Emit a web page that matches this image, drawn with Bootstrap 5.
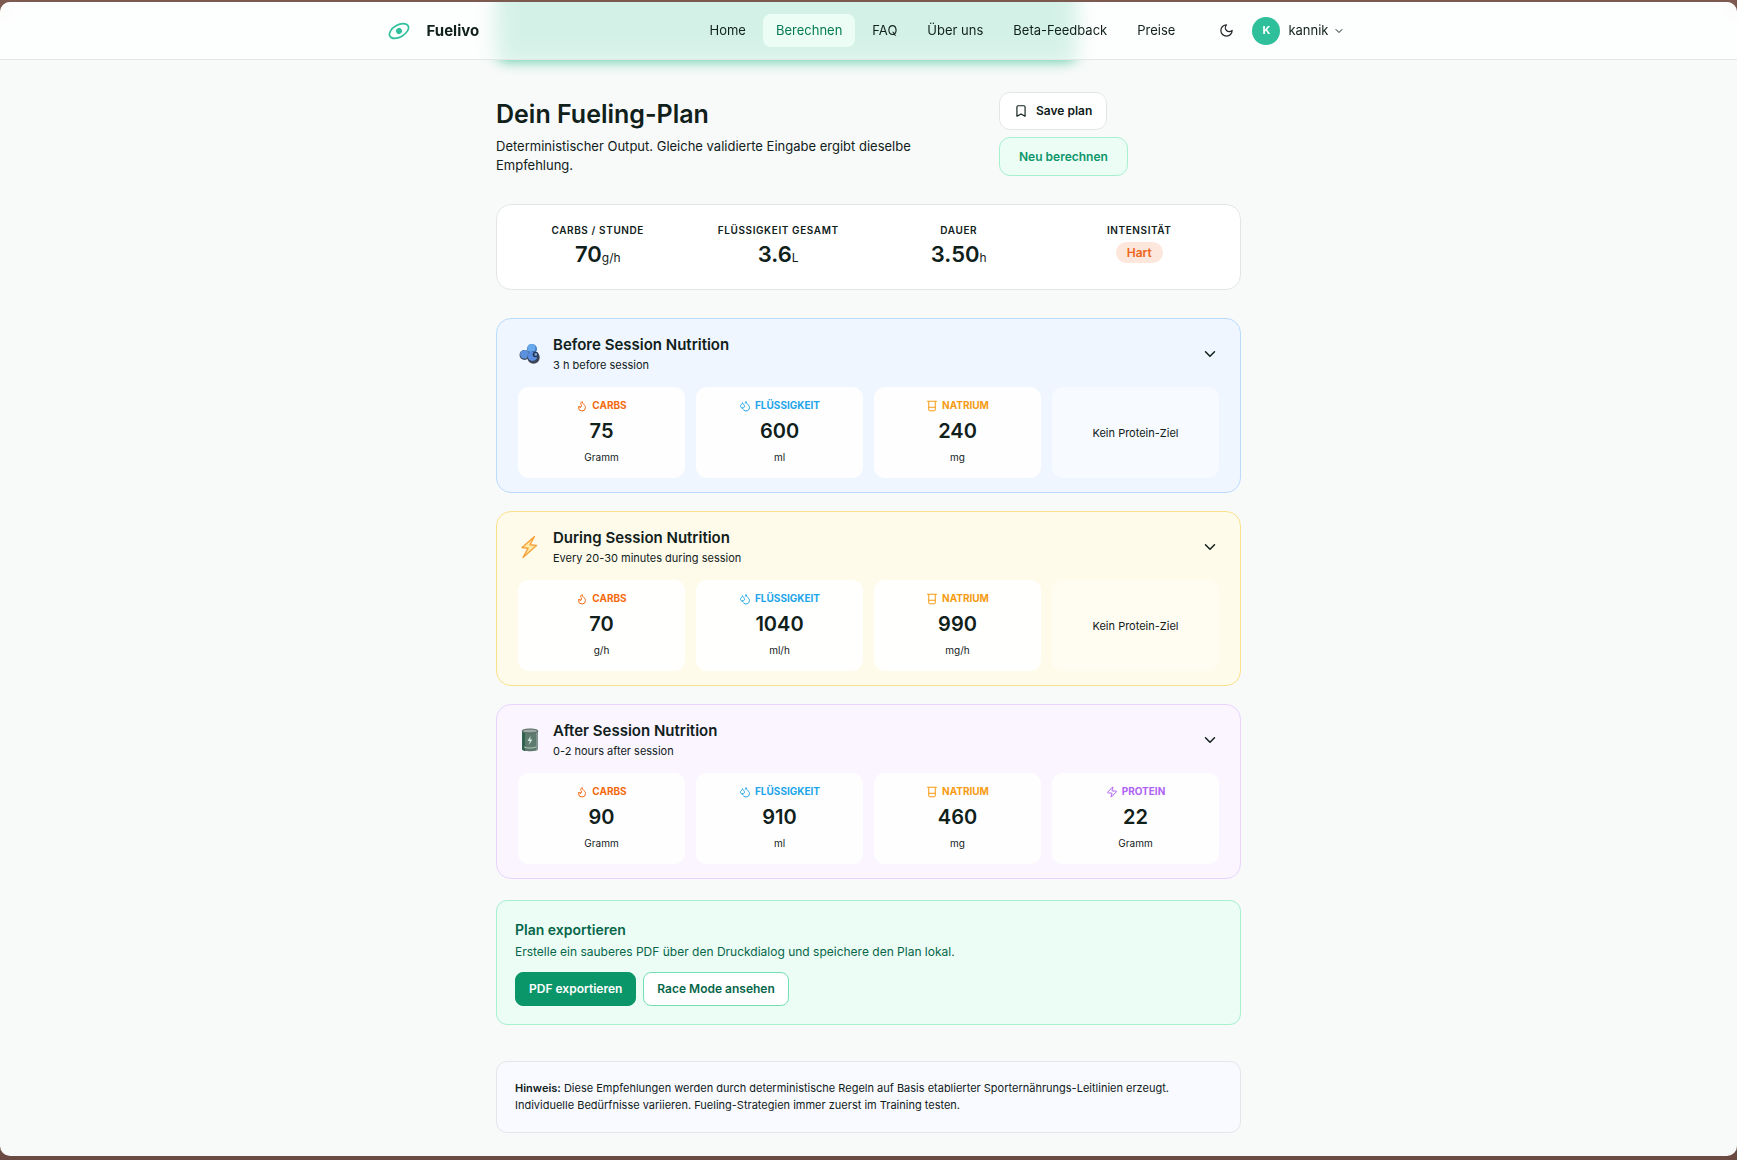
<!DOCTYPE html>
<html lang="de">
<head>
<meta charset="utf-8">
<meta name="viewport" content="width=device-width, initial-scale=1">
<title>Fuelivo – Dein Fueling-Plan</title>
<link href="https://cdn.jsdelivr.net/npm/bootstrap@5.3.0/dist/css/bootstrap.min.css" rel="stylesheet">
<style>
  :root { --ink: #10201a; --line: #e2e7e5; --mint: #ecfdf5; --mint-line: #a7f0d0; --green: #0b966a; }
  body { background: linear-gradient(#7d5a50, #6a4a43); color: var(--ink); font-family: Inter, sans-serif; font-size: 13px; line-height: 19px; }
  .app-window { background: #f8faf9; border-radius: 10px; margin: 2px 0 4px; overflow: hidden; position: relative; }
  .ic { fill: none; stroke: currentColor; stroke-width: 2; stroke-linecap: round; stroke-linejoin: round; flex: none; }

  .glow { position: absolute; left: 0; right: 164px; top: -100px; height: 159px; background: #5ac9a5; border-radius: 10px; filter: blur(7px); }
  .glow-wrap { position: absolute; inset: 0 0 auto; }
  .topbar { background: rgba(255,255,255,.74); backdrop-filter: blur(8px); border-bottom: 1px solid var(--line); padding: 0; height: 58px; position: relative; }
  .bar-inner { max-width: 964px; padding: 0 6px 0 0; }
  .brand-name { font-size: 15px; font-weight: 700; color: var(--ink); }
  .topbar .navbar-nav .nav-link { color: var(--ink); padding: 7px 13px; border-radius: 8px; }
  .topbar .navbar-nav .nav-link.active { background: var(--mint); color: #067a55; }
  .moon-btn { width: 36px; height: 36px; margin-left: 20px; }
  .user-btn { font-size: 13px; color: var(--ink); }
  .avatar { width: 28px; height: 28px; background: #2fc09b; font-size: 11px; font-weight: 700; color: #fff; }

  .plan { max-width: 745px; padding: 32px 0 23px; position: relative; }
  .plan h1 { font-size: 25px; line-height: 34px; font-weight: 600; margin-bottom: 6px; }
  .plan-intro { max-width: 448px; padding-bottom: 1px; }
  .plan-actions { width: 242px; gap: 7px; }
  .pill-btn { font-size: 12px; line-height: 18px; font-weight: 600; border-radius: 11px; padding: 9px 14px; color: var(--ink); }
  .save-btn { background: #fff; border-color: var(--line); }
  .recalc-btn { background: var(--mint); border-color: var(--mint-line); color: var(--green); padding: 9px 19px; line-height: 19px; }

  .summary { background: #fff; border: 1px solid var(--line); border-radius: 15px; padding: 17px 18px 20px; margin: 28px 0; gap: 15px; }
  .summary dt { font-size: 10px; line-height: 16px; font-weight: 600; letter-spacing: .06em; text-transform: uppercase; margin-bottom: 1px; }
  .summary dd { margin: 0; height: 30px; line-height: 30px; }
  .summary dd strong { font-size: 22px; font-weight: 600; }
  .summary dd span { font-size: 12px; }
  .summary dd .level { display: inline-block; background: #fde6dc; color: #ee6518; font-weight: 600; line-height: 21px; border-radius: 11px; padding: 0 11px; margin-top: 3px; vertical-align: top; }
  .four > * { flex: 1 1 0; min-width: 0; }

  .phases { gap: 18px; margin-bottom: 21px; }
  .phase { border: 1px solid; border-radius: 15px; padding: 15px 21px 14px; }
  .phase-pre { background: #eff6ff; border-color: #bbdbfd; }
  .phase-mid { background: #fffbeb; border-color: #fbe08c; }
  .phase-post { background: #faf5ff; border-color: #e8d4fd; }
  .phase-head { color: var(--ink); gap: 11px; margin-bottom: 13px; padding: 0; }
  .phase-head h2 { font-size: 15px; line-height: 22px; font-weight: 600; margin: 0; }
  .phase-head small, .tile-none { font-size: 11px; line-height: 18px; }
  .phase-head small { display: block; }
  .tiles { gap: 11px; }
  .tile { background: rgba(255,255,255,.9); border-radius: 11px; padding: 11px 0 13px; text-align: center; }
  .tile h3 { font-size: 10px; line-height: 15px; font-weight: 700; margin: 0 0 4px; gap: 4px; text-transform: uppercase; }
  .tile p { margin: 0; font-size: 20px; line-height: 28px; font-weight: 600; }
  .tile .unit { font-size: 10px; line-height: 15px; font-weight: 400; margin-top: 5px; }
  .tile-none { background: rgba(255,255,255,.5); border-radius: 11px; }
  .phase-mid .tile-none { background: rgba(255,255,255,.38); }
  .c-carb { color: #f46a10; } .c-fluid { color: #21a5ea; } .c-salt { color: #f59b12; } .c-prot { color: #ae63f5; }

  .export { background: var(--mint); border: 1px solid var(--mint-line); border-radius: 11px; padding: 18px; margin-bottom: 36px; color: #07664a; }
  .export h2 { font-size: 14px; line-height: 22px; font-weight: 600; margin: 0 0 2px; }
  .export p { font-size: 12px; line-height: 18px; margin: 0 0 11px; }
  .export-actions { gap: 7px; }
  .export .btn { font-size: 12px; line-height: 18px; font-weight: 600; border-radius: 8px; padding: 7px 13px; }
  .pdf-btn { background: var(--green); border-color: var(--green); color: #fff; }
  .race-btn { background: #fff; border-color: #72dfb7; color: #07664a; }
  .hint { background: #f9faff; border: 1px solid #e3e6eb; border-radius: 11px; padding: 18px; font-size: 11px; line-height: 17px; margin: 0; }
  .hint strong { font-weight: 600; }
</style>
</head>
<body>
<svg class="d-none" aria-hidden="true">
  <symbol id="flame" viewBox="0 0 24 24"><path d="M8.5 14.5A2.5 2.5 0 0 0 11 12c0-1.38-.5-2-1-3-1.072-2.143-.224-4.054 2-6 .5 2.5 2 4.9 4 6.500 2 1.600 3 3.500 3 5.500a7 7 0 1 1-14 0c0-1.153.433-2.294 1-3a2.500 2.500 0 0 0 2.500 2.500z"/></symbol>
  <symbol id="drops" viewBox="0 0 24 24"><path d="M7 16.300c2.200 0 4-1.830 4-4.050 0-1.160-.57-2.260-1.710-3.190S7.290 6.750 7 5.300c-.29 1.450-1.140 2.840-2.290 3.760S3 11.100 3 12.250c0 2.220 1.800 4.050 4 4.050z"/><path d="M12.560 6.600A10.970 10.970 0 0 0 14 3.020c.5 2.500 2 4.900 4 6.500s3 3.500 3 5.500a6.980 6.980 0 0 1-11.910 4.970"/></symbol>
  <symbol id="beaker" viewBox="0 0 24 24"><path d="M3 2.500h18M5.500 3v17a1.500 1.500 0 0 0 1.500 1.500h10a1.500 1.500 0 0 0 1.500-1.500V3M5.500 14.500h13"/></symbol>
  <symbol id="zap" viewBox="0 0 24 24"><path d="M4 14a1 1 0 0 1-.78-1.630l9.900-10.200a.5.5 0 0 1 .86.460l-1.920 6.020A1 1 0 0 0 13 10h7a1 1 0 0 1 .78 1.630l-9.900 10.200a.5.5 0 0 1-.86-.46l1.920-6.020A1 1 0 0 0 11 14z"/></symbol>
  <symbol id="chev" viewBox="0 0 24 24"><path d="m6 9 6 6 6-6"/></symbol>
</svg>

<div class="app-window">
  <div class="glow-wrap" aria-hidden="true"><div class="plan mx-auto p-0"><div class="glow"></div></div></div>

  <nav class="topbar navbar navbar-expand">
    <div class="bar-inner w-100 mx-auto d-flex align-items-center">
      <a class="d-flex align-items-center text-decoration-none me-auto" href="#">
        <svg class="me-3" width="24" height="24" viewBox="0 0 24 24" aria-hidden="true"><g transform="rotate(-30 12 12)"><ellipse cx="12" cy="12" rx="10.500" ry="6" fill="none" stroke="#2fc09b" stroke-width="1.600"/><circle cx="12" cy="12" r="3" fill="#2fc09b"/></g></svg>
        <span class="brand-name">Fuelivo</span>
      </a>
      <div class="navbar-nav gap-1">
        <a class="nav-link" href="#">Home</a>
        <a class="nav-link active" aria-current="page" href="#">Berechnen</a>
        <a class="nav-link" href="#">FAQ</a>
        <a class="nav-link" href="#">Über uns</a>
        <a class="nav-link" href="#">Beta-Feedback</a>
        <a class="nav-link" href="#">Preise</a>
      </div>
      <button class="moon-btn btn border-0 p-0 d-flex align-items-center justify-content-center me-2" type="button" aria-label="Dunkelmodus">
        <svg class="ic" width="15" height="15" viewBox="0 0 24 24"><path d="M12 3a6 6 0 0 0 9 9 9 9 0 1 1-9-9Z"/></svg>
      </button>
      <button class="user-btn btn border-0 p-0 d-flex align-items-center gap-1" type="button" aria-haspopup="menu">
        <span class="avatar rounded-circle d-flex align-items-center justify-content-center me-1">K</span>
        <span>kannik</span>
        <svg class="ic" width="12" height="12"><use href="#chev"/></svg>
      </button>
    </div>
  </nav>

  <main class="plan mx-auto">
    <header class="d-flex align-items-end justify-content-between">
      <div class="plan-intro">
        <h1>Dein Fueling-Plan</h1>
        <p class="mb-0">Deterministischer Output. Gleiche validierte Eingabe ergibt dieselbe Empfehlung.</p>
      </div>
      <div class="plan-actions d-flex flex-column align-items-start">
        <button class="pill-btn save-btn btn d-flex align-items-center" type="button">
          <svg class="ic me-2" width="14" height="14" viewBox="0 0 24 24"><path d="m19 21-7-4-7 4V5a2 2 0 0 1 2-2h10a2 2 0 0 1 2 2v16z"/></svg>Save plan
        </button>
        <button class="pill-btn recalc-btn btn" type="button">Neu berechnen</button>
      </div>
    </header>

    <dl class="summary four d-flex text-center">
      <div><dt>Carbs / Stunde</dt><dd><strong>70</strong><span>g/h</span></dd></div>
      <div><dt>Flüssigkeit gesamt</dt><dd><strong>3.6</strong><span>L</span></dd></div>
      <div><dt>Dauer</dt><dd><strong>3.50</strong><span>h</span></dd></div>
      <div><dt>Intensität</dt><dd><span class="level">Hart</span></dd></div>
    </dl>

    <div class="phases d-flex flex-column">
      <section class="phase phase-pre">
        <button class="phase-head btn border-0 w-100 d-flex align-items-center text-start" type="button" aria-expanded="true">
          <svg width="24" height="24" viewBox="0 0 24 24" aria-hidden="true">
            <circle cx="6.500" cy="13" r="5" fill="#44536b"/><circle cx="6.500" cy="12.200" r="4.300" fill="#5b91dd"/>
            <circle cx="14" cy="7" r="5" fill="#4279c4"/><circle cx="13.500" cy="6" r="4" fill="#68a9ee"/>
            <circle cx="15.500" cy="15.500" r="6.200" fill="#3b4657"/><circle cx="14.500" cy="14.200" r="4.800" fill="#5a8de0"/>
            <circle cx="17.500" cy="12.500" r="2.800" fill="#23344f"/><circle cx="17.800" cy="12.500" r="1.400" fill="#7fa3d5"/>
          </svg>
          <span class="flex-grow-1"><h2>Before Session Nutrition</h2><small>3 h before session</small></span>
          <svg class="ic" width="18" height="18"><use href="#chev"/></svg>
        </button>
        <div class="tiles four d-flex">
          <div class="tile"><h3 class="c-carb d-flex align-items-center justify-content-center"><svg class="ic" width="12" height="12"><use href="#flame"/></svg>Carbs</h3><p>75</p><p class="unit">Gramm</p></div>
          <div class="tile"><h3 class="c-fluid d-flex align-items-center justify-content-center"><svg class="ic" width="12" height="12"><use href="#drops"/></svg>Flüssigkeit</h3><p>600</p><p class="unit">ml</p></div>
          <div class="tile"><h3 class="c-salt d-flex align-items-center justify-content-center"><svg class="ic" width="12" height="12"><use href="#beaker"/></svg>Natrium</h3><p>240</p><p class="unit">mg</p></div>
          <div class="tile-none d-flex align-items-center justify-content-center">Kein Protein-Ziel</div>
        </div>
      </section>

      <section class="phase phase-mid">
        <button class="phase-head btn border-0 w-100 d-flex align-items-center text-start" type="button" aria-expanded="true">
          <svg width="24" height="24" viewBox="0 0 24 24" aria-hidden="true"><path d="M16.500 1.500 4 12.500l6 .8L5 22.500 18.500 10.500l-6.500-.8z" fill="#ffe9a8" stroke="#f6a33c" stroke-width="1.400" stroke-linejoin="round"/></svg>
          <span class="flex-grow-1"><h2>During Session Nutrition</h2><small>Every 20-30 minutes during session</small></span>
          <svg class="ic" width="18" height="18"><use href="#chev"/></svg>
        </button>
        <div class="tiles four d-flex">
          <div class="tile"><h3 class="c-carb d-flex align-items-center justify-content-center"><svg class="ic" width="12" height="12"><use href="#flame"/></svg>Carbs</h3><p>70</p><p class="unit">g/h</p></div>
          <div class="tile"><h3 class="c-fluid d-flex align-items-center justify-content-center"><svg class="ic" width="12" height="12"><use href="#drops"/></svg>Flüssigkeit</h3><p>1040</p><p class="unit">ml/h</p></div>
          <div class="tile"><h3 class="c-salt d-flex align-items-center justify-content-center"><svg class="ic" width="12" height="12"><use href="#beaker"/></svg>Natrium</h3><p>990</p><p class="unit">mg/h</p></div>
          <div class="tile-none d-flex align-items-center justify-content-center">Kein Protein-Ziel</div>
        </div>
      </section>

      <section class="phase phase-post">
        <button class="phase-head btn border-0 w-100 d-flex align-items-center text-start" type="button" aria-expanded="true">
          <svg width="24" height="24" viewBox="0 0 24 24" aria-hidden="true">
            <path d="M4 3v18c0 3 16 3 16 0V3z" fill="#5c7a6d"/><path d="M4 3v18c0 1 1.500 1.700 3 2V4z" fill="#2f6350"/><path d="M18 4v18.700c1.200-.4 2-1 2-1.700V3z" fill="#82928c"/>
            <ellipse cx="12" cy="3" rx="8" ry="2" fill="#9aa8a3" stroke="#53655d"/>
            <path d="M12.500 8 9.500 13h2.300l-1 4 3.700-5.500h-2.200z" fill="#cfe3da"/><path d="M6 19c3 1.400 9 1.400 12 0" fill="none" stroke="#b5c6be"/>
          </svg>
          <span class="flex-grow-1"><h2>After Session Nutrition</h2><small>0-2 hours after session</small></span>
          <svg class="ic" width="18" height="18"><use href="#chev"/></svg>
        </button>
        <div class="tiles four d-flex">
          <div class="tile"><h3 class="c-carb d-flex align-items-center justify-content-center"><svg class="ic" width="12" height="12"><use href="#flame"/></svg>Carbs</h3><p>90</p><p class="unit">Gramm</p></div>
          <div class="tile"><h3 class="c-fluid d-flex align-items-center justify-content-center"><svg class="ic" width="12" height="12"><use href="#drops"/></svg>Flüssigkeit</h3><p>910</p><p class="unit">ml</p></div>
          <div class="tile"><h3 class="c-salt d-flex align-items-center justify-content-center"><svg class="ic" width="12" height="12"><use href="#beaker"/></svg>Natrium</h3><p>460</p><p class="unit">mg</p></div>
          <div class="tile"><h3 class="c-prot d-flex align-items-center justify-content-center"><svg class="ic" width="12" height="12"><use href="#zap"/></svg>Protein</h3><p>22</p><p class="unit">Gramm</p></div>
        </div>
      </section>
    </div>

    <section class="export">
      <h2>Plan exportieren</h2>
      <p>Erstelle ein sauberes PDF über den Druckdialog und speichere den Plan lokal.</p>
      <div class="export-actions d-flex">
        <button class="pdf-btn btn" type="button">PDF exportieren</button>
        <button class="race-btn btn" type="button">Race Mode ansehen</button>
      </div>
    </section>

    <p class="hint"><strong>Hinweis:</strong> Diese Empfehlungen werden durch deterministische Regeln auf Basis etablierter Sporternährungs-Leitlinien erzeugt. Individuelle Bedürfnisse variieren. Fueling-Strategien immer zuerst im Training testen.</p>
  </main>
</div>
<script src="https://cdn.jsdelivr.net/npm/bootstrap@5.3.0/dist/js/bootstrap.bundle.min.js"></script>
</body>
</html>
